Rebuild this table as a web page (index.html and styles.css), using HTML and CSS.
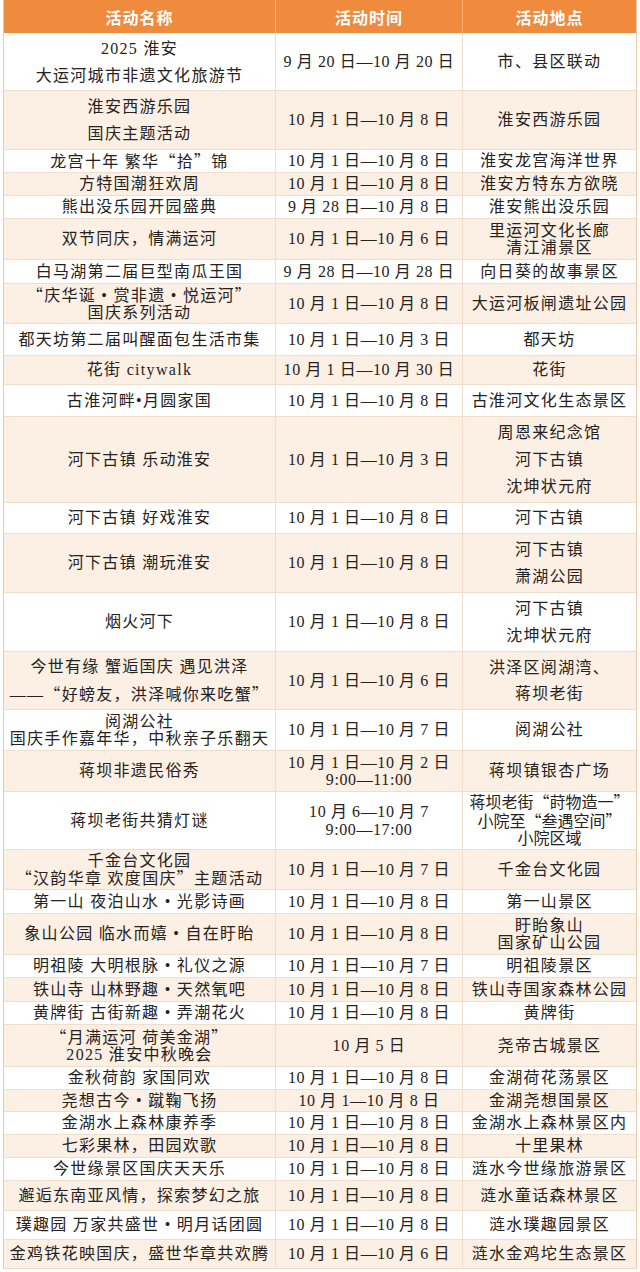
FILE: index.html
```html
<!DOCTYPE html>
<html lang="zh-CN">
<head>
<meta charset="utf-8">
<title>国庆活动一览</title>
<link rel="stylesheet" href="styles.css">
</head>
<body>
<div class="sheet">
  <div class="head">
    <div class="hcell">活动名称</div>
    <div class="hcell">活动时间</div>
    <div class="hcell">活动地点</div>
  </div>
  <div class="body">
    <div class="row h58"><div class="cell loose">2025 淮安<br>大运河城市非遗文化旅游节</div><div class="cell t">9 月 20 日—10 月 20 日</div><div class="cell">市、县区联动</div></div>
    <div class="row h59"><div class="cell loose">淮安西游乐园<br>国庆主题活动</div><div class="cell t">10 月 1 日—10 月 8 日</div><div class="cell">淮安西游乐园</div></div>
    <div class="row h23"><div class="cell"><div class="tx">龙宫十年 繁华<span class="q">“</span>拾<span class="q">”</span>锦</div></div><div class="cell t">10 月 1 日—10 月 8 日</div><div class="cell">淮安龙宫海洋世界</div></div>
    <div class="row h23"><div class="cell">方特国潮狂欢周</div><div class="cell t">10 月 1 日—10 月 8 日</div><div class="cell">淮安方特东方欲晓</div></div>
    <div class="row h23"><div class="cell">熊出没乐园开园盛典</div><div class="cell t">9 月 28 日—10 月 8 日</div><div class="cell">淮安熊出没乐园</div></div>
    <div class="row h41"><div class="cell">双节同庆，情满运河</div><div class="cell t">10 月 1 日—10 月 6 日</div><div class="cell">里运河文化长廊<br>清江浦景区</div></div>
    <div class="row h24"><div class="cell">白马湖第二届巨型南瓜王国</div><div class="cell t">9 月 28 日—10 月 28 日</div><div class="cell">向日葵的故事景区</div></div>
    <div class="row h40"><div class="cell"><div class="tx"><span class="q">“</span>庆华诞 • 赏非遗 • 悦运河<span class="q">”</span><br>国庆系列活动</div></div><div class="cell t">10 月 1 日—10 月 8 日</div><div class="cell">大运河板闸遗址公园</div></div>
    <div class="row h32"><div class="cell">都天坊第二届叫醒面包生活市集</div><div class="cell t">10 月 1 日—10 月 3 日</div><div class="cell">都天坊</div></div>
    <div class="row h29"><div class="cell">花街 citywalk</div><div class="cell t">10 月 1 日—10 月 30 日</div><div class="cell">花街</div></div>
    <div class="row h32"><div class="cell">古淮河畔•月圆家国</div><div class="cell t">10 月 1 日—10 月 8 日</div><div class="cell">古淮河文化生态景区</div></div>
    <div class="row h86"><div class="cell">河下古镇 乐动淮安</div><div class="cell t">10 月 1 日—10 月 3 日</div><div class="cell loose">周恩来纪念馆<br>河下古镇<br>沈坤状元府</div></div>
    <div class="row h31"><div class="cell">河下古镇 好戏淮安</div><div class="cell t">10 月 1 日—10 月 8 日</div><div class="cell">河下古镇</div></div>
    <div class="row h59"><div class="cell">河下古镇 潮玩淮安</div><div class="cell t">10 月 1 日—10 月 8 日</div><div class="cell loose">河下古镇<br>萧湖公园</div></div>
    <div class="row h59"><div class="cell">烟火河下</div><div class="cell t">10 月 1 日—10 月 8 日</div><div class="cell loose">河下古镇<br>沈坤状元府</div></div>
    <div class="row h58"><div class="cell mid"><div class="tx">今世有缘 蟹逅国庆 遇见洪泽<br>——<span class="q">“</span>好螃友，洪泽喊你来吃蟹<span class="q">”</span></div></div><div class="cell t">10 月 1 日—10 月 6 日</div><div class="cell mid">洪泽区阅湖湾、<br>蒋坝老街</div></div>
    <div class="row h41"><div class="cell">阅湖公社<br>国庆手作嘉年华，中秋亲子乐翻天</div><div class="cell t">10 月 1 日—10 月 7 日</div><div class="cell">阅湖公社</div></div>
    <div class="row h41"><div class="cell">蒋坝非遗民俗秀</div><div class="cell t">10 月 1 日—10 月 2 日<br>9:00—11:00</div><div class="cell">蒋坝镇银杏广场</div></div>
    <div class="row h58"><div class="cell">蒋坝老街共猜灯谜</div><div class="cell t">10 月 6—10 月 7<br>9:00—17:00</div><div class="cell narrow"><div class="tx">蒋坝老街<span class="q">“</span>莳物造一<span class="q">”</span><br>小院至<span class="q">“</span>叁遇空间<span class="q">”</span><br>小院区域</div></div></div>
    <div class="row h40"><div class="cell"><div class="tx">千金台文化园<br><span class="q">“</span>汉韵华章 欢度国庆<span class="q">”</span>主题活动</div></div><div class="cell t">10 月 1 日—10 月 7 日</div><div class="cell">千金台文化园</div></div>
    <div class="row h24"><div class="cell">第一山 夜泊山水 • 光影诗画</div><div class="cell t">10 月 1 日—10 月 8 日</div><div class="cell">第一山景区</div></div>
    <div class="row h41"><div class="cell">象山公园 临水而嬉 • 自在盱眙</div><div class="cell t">10 月 1 日—10 月 8 日</div><div class="cell">盱眙象山<br>国家矿山公园</div></div>
    <div class="row h23"><div class="cell">明祖陵 大明根脉 • 礼仪之源</div><div class="cell t">10 月 1 日—10 月 7 日</div><div class="cell">明祖陵景区</div></div>
    <div class="row h24"><div class="cell">铁山寺 山林野趣 • 天然氧吧</div><div class="cell t">10 月 1 日—10 月 8 日</div><div class="cell">铁山寺国家森林公园</div></div>
    <div class="row h23"><div class="cell">黄牌街 古街新趣 • 弄潮花火</div><div class="cell t">10 月 1 日—10 月 8 日</div><div class="cell">黄牌街</div></div>
    <div class="row h42"><div class="cell"><div class="tx"><span class="q">“</span>月满运河 荷美金湖<span class="q">”</span><br>2025 淮安中秋晚会</div></div><div class="cell t">10 月 5 日</div><div class="cell">尧帝古城景区</div></div>
    <div class="row h23"><div class="cell">金秋荷韵 家国同欢</div><div class="cell t">10 月 1 日—10 月 8 日</div><div class="cell">金湖荷花荡景区</div></div>
    <div class="row h22"><div class="cell">尧想古今 • 蹴鞠飞扬</div><div class="cell t">10 月 1—10 月 8 日</div><div class="cell">金湖尧想国景区</div></div>
    <div class="row h23"><div class="cell">金湖水上森林康养季</div><div class="cell t">10 月 1 日—10 月 8 日</div><div class="cell">金湖水上森林景区内</div></div>
    <div class="row h23"><div class="cell">七彩果林，田园欢歌</div><div class="cell t">10 月 1 日—10 月 8 日</div><div class="cell">十里果林</div></div>
    <div class="row h23"><div class="cell">今世缘景区国庆天天乐</div><div class="cell t">10 月 1 日—10 月 8 日</div><div class="cell">涟水今世缘旅游景区</div></div>
    <div class="row h30"><div class="cell">邂逅东南亚风情，探索梦幻之旅</div><div class="cell t">10 月 1 日—10 月 8 日</div><div class="cell">涟水童话森林景区</div></div>
    <div class="row h29"><div class="cell">璞趣园 万家共盛世 • 明月话团圆</div><div class="cell t">10 月 1 日—10 月 8 日</div><div class="cell">涟水璞趣园景区</div></div>
    <div class="row h28"><div class="cell">金鸡铁花映国庆，盛世华章共欢腾</div><div class="cell t">10 月 1 日—10 月 6 日</div><div class="cell">涟水金鸡坨生态景区</div></div>
  </div>
</div>
</body>
</html>
```

FILE: styles.css
```css
html, body {
  margin: 0;
  padding: 0;
  background: #ffffff;
}

body {
  font-family: "Liberation Serif", "Noto Sans CJK SC", serif;
  color: #262220;
}

.sheet {
  margin-left: 3px;
  width: 634px;
  box-sizing: border-box;
  border-left: 1px solid #e9cdb0;
  border-right: 1px solid #e9cdb0;
  border-bottom: 1px solid #efd9c4;
}

.head,
.row {
  display: grid;
  grid-template-columns: 272px 187px 173px;
  box-sizing: border-box;
}

.head {
  height: 33px;
  background: #f08a3c;
}

.hcell {
  display: flex;
  align-items: center;
  justify-content: center;
  color: #ffffff;
  font-family: "Noto Sans CJK SC", sans-serif;
  font-weight: 700;
  font-size: 16px;
  letter-spacing: 1px;
  border-right: 1px solid #f6b27e;
}

.hcell:last-child {
  border-right: none;
}

.row {
  background: #ffffff;
  border-bottom: 1px solid #f0ddca;
}

.row:nth-child(even) {
  background: #fcf0e5;
}

.row:last-child {
  border-bottom: none;
}

.cell {
  display: flex;
  align-items: center;
  justify-content: center;
  text-align: center;
  white-space: nowrap;
  font-size: 16px;
  line-height: 17.5px;
  letter-spacing: 1.3px;
  border-right: 1px solid #f0ddca;
}

.cell:last-child {
  border-right: none;
}

.tx {
  text-align: center;
}

.q {
  font-family: "Noto Sans CJK SC", sans-serif;
}

.cell.t {
  letter-spacing: 0.6px;
}

.cell.narrow {
  letter-spacing: 0;
}

.cell.loose {
  line-height: 27px;
}

.cell.mid {
  line-height: 26px;
}

.h22 { height: 22px; }
.h23 { height: 23px; }
.h24 { height: 24px; }
.h28 { height: 28px; }
.h29 { height: 29px; }
.h30 { height: 30px; }
.h31 { height: 31px; }
.h32 { height: 32px; }
.h40 { height: 40px; }
.h41 { height: 41px; }
.h42 { height: 42px; }
.h58 { height: 58px; }
.h59 { height: 59px; }
.h86 { height: 86px; }
```
